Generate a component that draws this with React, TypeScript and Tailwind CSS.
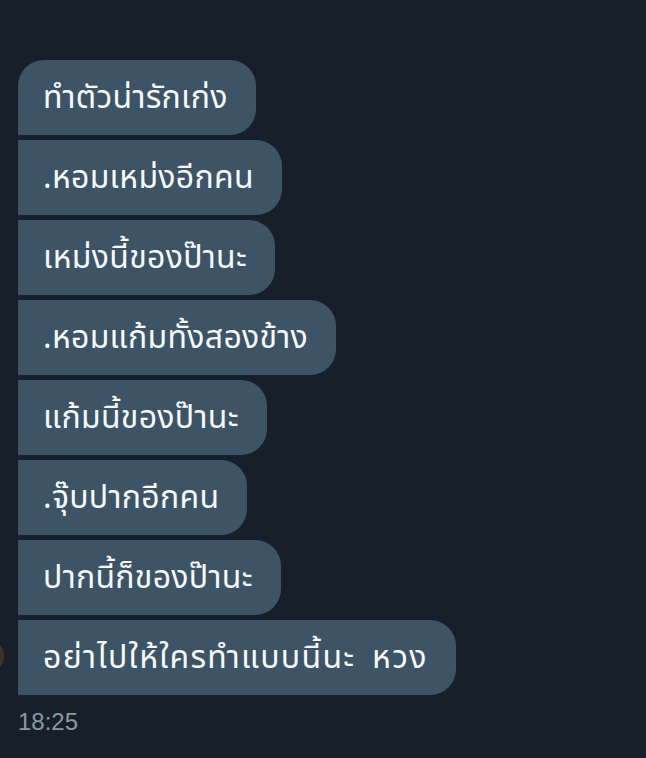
import React from "react";

const messages = [
  "ทำตัวน่ารักเก่ง",
  ".หอมเหม่งอีกคน",
  "เหม่งนี้ของป๊านะ",
  ".หอมแก้มทั้งสองข้าง",
  "แก้มนี้ของป๊านะ",
  ".จุ๊บปากอีกคน",
  "ปากนี้ก็ของป๊านะ",
  "อย่าไปให้ใครทำแบบนี้นะ หวง",
];

export default function App() {
  return (
    <div
      className="relative w-[646px] h-[758px] overflow-hidden bg-[#17202a]"
      style={{ fontFamily: '"Noto Sans Thai", "Noto Sans", "Liberation Sans", sans-serif' }}
    >
      <div className="absolute left-[-36px] top-[638px] w-[40px] h-[36px] rounded-full bg-[#3f3129]" />
      <div className="flex flex-col items-start gap-[5px] pt-[60px] pl-[18px]">
        {messages.map((m, i) => (
          <div
            key={i}
            className={
              "flex items-center h-[75px] pl-[25px] pr-[28px] bg-[#3d5466] text-[#f7f9f9] text-[32px] leading-none rounded-r-[26px] " +
              (i === 0 ? "rounded-tl-[26px]" : "")
            }
          >
            <span
              className={
                "whitespace-pre [word-spacing:7px] " +
                (i === messages.length - 1 ? "tracking-[1.3px]" : "tracking-[0.3px]")
              }
            >
              {m}
            </span>
          </div>
        ))}
        <div
          className="mt-[8px] text-[24px] leading-[28px] text-[#8b98a5]"
          style={{ fontFamily: '"Liberation Sans", Arial, sans-serif' }}
        >
          18:25
        </div>
      </div>
    </div>
  );
}
